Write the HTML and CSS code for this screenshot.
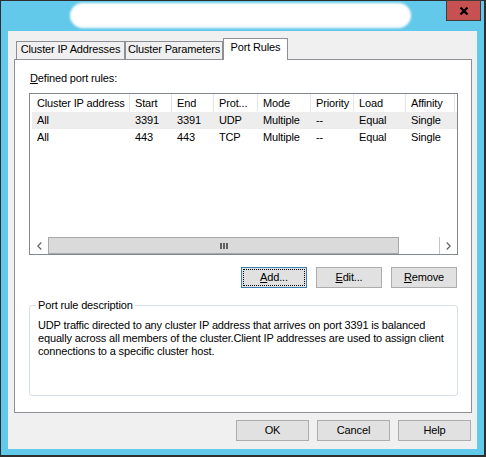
FILE: index.html
```html
<!DOCTYPE html>
<html>
<head>
<meta charset="utf-8">
<link rel="stylesheet" href="styles.css">
</head>
<body>
<div class="window">
  <div class="titlebar">
    <div class="title-blur"></div>
    <div class="close">
      <svg width="10" height="10" viewBox="0 0 10 10"><path d="M1.5 1.5 L8.5 8.5 M8.5 1.5 L1.5 8.5" stroke="#000" stroke-width="2.4" fill="none"/></svg>
    </div>
  </div>
  <div class="client">
    <div class="tabs">
      <div class="tab t1">Cluster IP Addresses</div>
      <div class="tab t2">Cluster Parameters</div>
      <div class="tab active">Port Rules</div>
    </div>
    <div class="panel">
      <div class="label"><u>D</u>efined port rules:</div>
      <div class="listview">
        <div class="lv-header">
          <div>Cluster IP address</div>
          <div>Start</div>
          <div>End</div>
          <div>Prot...</div>
          <div>Mode</div>
          <div>Priority</div>
          <div>Load</div>
          <div>Affinity</div>
        </div>
        <div class="lv-body">
          <div class="lv-row sel">
            <div>All</div><div>3391</div><div>3391</div><div>UDP</div><div>Multiple</div><div>--</div><div>Equal</div><div>Single</div>
          </div>
          <div class="lv-row">
            <div>All</div><div>443</div><div>443</div><div>TCP</div><div>Multiple</div><div>--</div><div>Equal</div><div>Single</div>
          </div>
        </div>
        <div class="hscroll">
          <div class="sb-btn left">
            <svg width="5" height="8" viewBox="0 0 5 8"><path d="M4.3 0.5 L0.8 4 L4.3 7.5" stroke="#606060" stroke-width="1.2" fill="none"/></svg>
          </div>
          <div class="sb-thumb">
            <svg width="8" height="6" viewBox="0 0 8 6"><rect x="0" y="0" width="2" height="6" fill="#606060"/><rect x="3" y="0" width="2" height="6" fill="#606060"/><rect x="6" y="0" width="2" height="6" fill="#606060"/></svg>
          </div>
          <div class="sb-track"></div>
          <div class="sb-btn right">
            <svg width="5" height="8" viewBox="0 0 5 8"><path d="M0.7 0.5 L4.2 4 L0.7 7.5" stroke="#606060" stroke-width="1.2" fill="none"/></svg>
          </div>
        </div>
      </div>
      <div class="btn-row">
        <div class="btn focus"><span class="focus-rect"><u>A</u>dd...</span></div>
        <div class="btn"><u>E</u>dit...</div>
        <div class="btn"><u>R</u>emove</div>
      </div>
      <div class="group">
        <div class="legend">Port rule description</div>
        <p class="desc">UDP traffic directed to any cluster IP address that arrives on port 3391 is balanced<br>equally across all members of the cluster.Client IP addresses are used to assign client<br>connections to a specific cluster host.</p>
      </div>
    </div>
    <div class="dlg-buttons">
      <div class="btn dbtn">OK</div>
      <div class="btn dbtn">Cancel</div>
      <div class="btn dbtn">Help</div>
    </div>
  </div>
</div>
</body>
</html>
```
FILE: styles.css
```css
* { box-sizing: border-box; }
html, body { margin: 0; padding: 0; }
body {
  width: 486px;
  height: 457px;
  overflow: hidden;
  font-family: "Liberation Sans", Arial, sans-serif;
  font-size: 11px;
  letter-spacing: -0.15px;
  color: #000;
}
u { text-decoration: underline; }

.window {
  width: 486px;
  height: 457px;
  border-style: solid;
  border-color: #2e2e2e;
  border-width: 1px 2px 2px 1px;
  background: #63c9ea;
  display: flex;
  flex-direction: column;
}

.titlebar {
  height: 30px;
  display: flex;
  align-items: flex-start;
  flex: none;
}
.title-blur {
  margin: 2px 0 0 69px;
  width: 341px;
  height: 25px;
  border-radius: 13px;
  background: #fff;
  filter: blur(0.8px);
}
.close {
  margin: -1px 3px 0 auto;
  width: 35px;
  height: 21px;
  background: #c75050;
  border: 1px solid #3c3c3c;
  display: flex;
  align-items: center;
  justify-content: center;
  padding-top: 1px;
}

.client {
  flex: 1;
  margin: 0 7px 6px 7px;
  background: #f0f0f0;
  padding: 7px 5px 0 6px;
  display: flex;
  flex-direction: column;
}

.tabs {
  display: flex;
  align-items: flex-end;
  height: 21px;
  padding-left: 2px;
  position: relative;
  z-index: 1;
  flex: none;
}
.tab {
  height: 18px;
  border: 1px solid #8e8f94;
  border-bottom: none;
  background: #f0f0f0;
  text-align: center;
  line-height: 14px;
  white-space: nowrap;
}
.t1 { width: 109px; }
.t2 { width: 98px; }
.tab.active {
  width: 65px;
  height: 22px;
  margin-bottom: -1px;
  background: #fff;
  padding-top: 1px;
}

.panel {
  height: 354px;
  flex: none;
  border: 1px solid #8e8f94;
  background: #fff;
  padding: 12px 0 0 14px;
}
.label {
  line-height: 13px;
  padding-left: 1px;
}

.listview {
  margin-top: 8px;
  width: 429px;
  height: 162px;
  border: 1px solid #828790;
  background: #fff;
  display: flex;
  flex-direction: column;
}
.lv-header {
  display: grid;
  grid-template-columns: 100px 42px 42px 44px 53px 43px 52px 49px;
  height: 18px;
  line-height: 18px;
}
.lv-header > div {
  border-right: 1px solid #e5e5e5;
  padding-left: 5px;
  white-space: nowrap;
  overflow: hidden;
}
.lv-header > div:first-child { padding-left: 7px; }
.lv-body { flex: 1; }
.lv-row {
  margin-left: 2px;
  display: grid;
  grid-template-columns: 98px 42px 42px 44px 53px 43px 52px 49px;
  height: 17px;
  line-height: 17px;
}
.lv-row > div {
  padding-left: 5px;
  white-space: nowrap;
}
.lv-row.sel { background: #ededed; }

.hscroll {
  height: 17px;
  display: flex;
  flex: none;
}
.sb-btn {
  width: 18px;
  background: #fff;
  display: flex;
  align-items: center;
  justify-content: center;
}
.sb-btn.right { border-left: 1px solid #c4c4c4; }
.sb-thumb {
  width: 351px;
  background: #dadada;
  border: 1px solid #a8a8a8;
  display: flex;
  align-items: center;
  justify-content: center;
}
.sb-track { flex: 1; background: #fff; }

.btn-row {
  margin-top: 12px;
  width: 429px;
  display: flex;
  justify-content: flex-end;
  gap: 9px;
  padding-right: 1px;
}
.btn {
  width: 66px;
  height: 21px;
  border: 1px solid #adadad;
  background: #e1e1e1;
  text-align: center;
  line-height: 19px;
  white-space: nowrap;
}
.btn.focus {
  border-color: #3c7fb1;
  padding: 1px;
}
.focus-rect {
  display: block;
  height: 100%;
  border: 1px dotted #000;
  line-height: 15px;
}

.group {
  margin-top: 17px;
  width: 429px;
  height: 91px;
  border: 1px solid #d5dfe5;
  border-radius: 3px;
}
.legend {
  margin: -7px 0 0 6px;
  padding: 0 2px;
  background: #fff;
  width: fit-content;
  line-height: 13px;
}
.desc {
  margin: 7px 0 0 8px;
  line-height: 13px;
  white-space: nowrap;
}

.dlg-buttons {
  margin-top: 7px;
  display: flex;
  justify-content: flex-end;
  gap: 8px;
  padding-right: 1px;
}
.dbtn { width: 73px; }
```
